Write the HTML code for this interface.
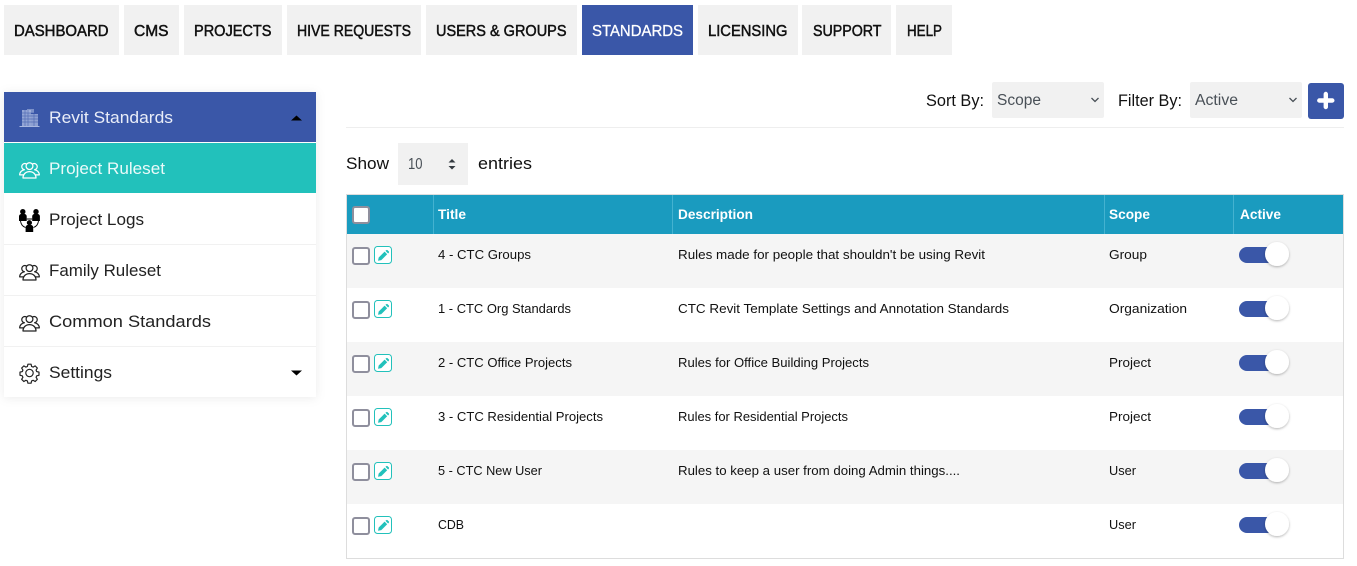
<!DOCTYPE html>
<html lang="en">
<head>
<meta charset="utf-8">
<title>Revit Standards</title>
<style>
html,body{margin:0;padding:0;background:#fff;width:1357px;height:566px;overflow:hidden}
svg{display:block}
text{font-family:"Liberation Sans",sans-serif;fill:#111}
.nav{font-size:15.5px;stroke:#111;stroke-width:.5px}
.side{font-size:17px;fill:#222}
.lbl{font-size:16.5px;fill:#111}
.sel{font-size:15.5px;fill:#495057}
.th{font-size:14px;font-weight:bold;fill:#fff}
.td{font-size:13px;fill:#111}
</style>
</head>
<body>
<svg width="1357" height="566" viewBox="0 0 1357 566" xmlns="http://www.w3.org/2000/svg">
<defs>
<filter id="sh" x="-10%" y="-10%" width="120%" height="120%"><feDropShadow dx="0" dy="1" stdDeviation="5" flood-color="#000" flood-opacity=".08"/></filter>
<filter id="ks" x="-30%" y="-30%" width="160%" height="160%"><feDropShadow dx="0" dy="1" stdDeviation="1.2" flood-color="#000" flood-opacity=".3"/></filter>
<g id="people" fill="none" stroke-width="1.25" stroke-linejoin="round" stroke-linecap="round">
<circle cx="10" cy="6.600" r="3.400"/>
<path d="M3.500 18.500c0-3.800 2.800-6.400 6.500-6.400s6.500 2.600 6.500 6.400z"/>
<path d="M6.600 4.300a3.100 3.100 0 1 0-1.700 5.900c-2.600.4-4.700 2.400-4.700 5.200h3.500"/>
<path d="M13.400 4.300a3.100 3.100 0 1 1 1.700 5.900c2.600.4 4.700 2.400 4.700 5.200h-3.500"/>
</g>
<g id="row"><rect x="353" y="248" width="16" height="16" rx="2" fill="#fff" stroke="#8f8f9d" stroke-width="2"/>
<rect x="374.500" y="246.500" width="17" height="17" rx="3" fill="#fff" stroke="#22c1bb" stroke-width="1"/>
<path d="M378 260.800l.7-3.300 5.900-5.900 2.600 2.600-5.900 5.900z" fill="#22c1bb"/>
<path d="M385.400 250.800l.8-.6c.5-.4 1-.4 1.400 0l1.200 1.200c.4.4.4.9 0 1.400l-.7.7z" fill="#22c1bb"/>
<rect x="1239" y="247" width="38" height="16" rx="8" fill="#3a57a8"/>
<circle cx="1277" cy="254" r="12" fill="#fff" filter="url(#ks)"/></g>
</defs>

<!-- top navigation -->
<g fill="#f1f1f1">
<rect x="4" y="5" width="115" height="50"/><rect x="124" y="5" width="55" height="50"/><rect x="184" y="5" width="98" height="50"/><rect x="287" y="5" width="134" height="50"/><rect x="426" y="5" width="151" height="50"/><rect x="582" y="5" width="111" height="50" fill="#3a57a8"/><rect x="698" y="5" width="100" height="50"/><rect x="802" y="5" width="89" height="50"/><rect x="896" y="5" width="56" height="50"/>
</g>
<text class="nav" x="14" y="36" textLength="94.500" lengthAdjust="spacingAndGlyphs">DASHBOARD</text>
<text class="nav" x="134" y="36" textLength="34.500" lengthAdjust="spacingAndGlyphs">CMS</text>
<text class="nav" x="194" y="36" textLength="77.500" lengthAdjust="spacingAndGlyphs">PROJECTS</text>
<text class="nav" x="297" y="36" textLength="114" lengthAdjust="spacingAndGlyphs">HIVE REQUESTS</text>
<text class="nav" x="436" y="36" textLength="130.500" lengthAdjust="spacingAndGlyphs">USERS &amp; GROUPS</text>
<text class="nav" x="592" y="36" textLength="91" lengthAdjust="spacingAndGlyphs" style="fill:#fff;stroke:#fff;stroke-width:.3px">STANDARDS</text>
<text class="nav" x="708" y="36" textLength="79.500" lengthAdjust="spacingAndGlyphs">LICENSING</text>
<text class="nav" x="813" y="36" textLength="68.500" lengthAdjust="spacingAndGlyphs">SUPPORT</text>
<text class="nav" x="907" y="36" textLength="35" lengthAdjust="spacingAndGlyphs">HELP</text>

<!-- sidebar -->
<rect x="4" y="92" width="312" height="305" fill="#fff" filter="url(#sh)"/>
<rect x="4" y="92" width="312" height="50" fill="#3a57a8"/>
<rect x="4" y="143" width="312" height="50" fill="#22c1bb"/>
<rect x="4" y="244" width="312" height="1" fill="#f1f1f1"/>
<rect x="4" y="295" width="312" height="1" fill="#f1f1f1"/>
<rect x="4" y="346" width="312" height="1" fill="#f1f1f1"/>

<!-- building icon -->
<g fill="#a9b8e0">
<rect x="19.500" y="126" width="20" height="1"/>
<rect x="22" y="110" width="9" height="16" opacity=".8"/>
<rect x="27" y="109" width="7" height="4" opacity=".6"/>
<rect x="31" y="114" width="7" height="12" opacity=".75"/>
</g>
<g stroke="#3a57a8" stroke-width=".7" fill="none" opacity=".7"><path d="M22 113h16M22 116h16M22 119h16M22 122h16M25 110v16M28 110v16M34 113v13"/></g>

<text class="side" x="49" y="123" textLength="124" lengthAdjust="spacingAndGlyphs" style="fill:#e9edf8">Revit Standards</text>
<path d="M291 120.500l5.500-5 5.500 5z" fill="#000"/>

<use href="#people" x="19.500" y="159.500" stroke="#fff"/>
<text class="side" x="49" y="174" textLength="116" lengthAdjust="spacingAndGlyphs" style="fill:#eafaf9">Project Ruleset</text>

<!-- project logs icon -->
<g fill="#000">
<circle cx="22.800" cy="211.700" r="2.700"/><path d="M19 221v-4.500c0-1.500 1-2.500 2.500-2.500h2.700c1.500 0 2.500 1 2.500 2.500v4.500z"/>
<circle cx="36" cy="211.700" r="2.700"/><path d="M32.200 221v-4.500c0-1.500 1-2.500 2.500-2.500h2.700c1.500 0 2.500 1 2.500 2.500v4.500z"/>
<circle cx="29.400" cy="222.700" r="2.600"/><path d="M25.600 232v-4.500c0-1.500 1-2.500 2.500-2.500h2.600c1.500 0 2.500 1 2.500 2.500v4.500z"/>
</g>
<path d="M20.500 221c.5 3.500 2 5.500 5 6.500M38.500 221c-.5 3.500-2 5.500-5 6.500M26.700 219h5.500" fill="none" stroke="#000" stroke-width=".9"/>
<text class="side" x="49" y="225" textLength="95" lengthAdjust="spacingAndGlyphs">Project Logs</text>

<use href="#people" x="19.500" y="261.500" stroke="#222"/>
<text class="side" x="49" y="276" textLength="112" lengthAdjust="spacingAndGlyphs">Family Ruleset</text>

<use href="#people" x="19.500" y="312.500" stroke="#222"/>
<text class="side" x="49" y="327" textLength="162" lengthAdjust="spacingAndGlyphs">Common Standards</text>

<!-- gear -->
<g fill="none" stroke="#222" stroke-width="1.350" stroke-linejoin="round" transform="translate(29.500 373) scale(.88) translate(-29.500 -373)">
<circle cx="29.500" cy="373" r="4.200"/>
<path d="M27.700 363h3.600l.6 2.600 1.700.7 2.300-1.400 2.500 2.500-1.400 2.300.7 1.700 2.600.6v3.600l-2.600.6-.7 1.700 1.400 2.300-2.500 2.500-2.300-1.400-1.700.7-.6 2.600h-3.600l-.6-2.600-1.700-.7-2.300 1.400-2.500-2.500 1.400-2.300-.7-1.700-2.600-.6v-3.600l2.600-.6.7-1.700-1.400-2.300 2.500-2.500 2.300 1.400 1.700-.7z"/>
</g>
<text class="side" x="49" y="378" textLength="63" lengthAdjust="spacingAndGlyphs">Settings</text>
<path d="M291 370.500h11l-5.500 5z" fill="#000"/>

<!-- toolbar -->
<text class="lbl" x="926" y="106" textLength="58" lengthAdjust="spacingAndGlyphs">Sort By:</text>
<rect x="992" y="82" width="112" height="36" rx="2" fill="#f1f1f1"/>
<text class="sel" x="997" y="105" textLength="44" lengthAdjust="spacingAndGlyphs">Scope</text>
<path d="M1091.500 98l3.500 3.500 3.500-3.500" fill="none" stroke="#495057" stroke-width="1.300"/>
<text class="lbl" x="1118" y="106" textLength="64" lengthAdjust="spacingAndGlyphs">Filter By:</text>
<rect x="1190" y="82" width="112" height="36" rx="2" fill="#f1f1f1"/>
<text class="sel" x="1195" y="105" textLength="43" lengthAdjust="spacingAndGlyphs">Active</text>
<path d="M1289.500 98l3.500 3.500 3.500-3.500" fill="none" stroke="#495057" stroke-width="1.300"/>
<rect x="1308" y="83" width="36" height="36" rx="3" fill="#3a57a8"/>
<path d="M1325.800 94v13M1319.300 100.500h13" stroke="#fff" stroke-width="4.400" stroke-linecap="round" fill="none"/>
<rect x="346" y="127" width="998" height="1" fill="#eee"/>

<!-- show entries -->
<text class="lbl" x="346" y="169" textLength="43" lengthAdjust="spacingAndGlyphs">Show</text>
<rect x="398" y="143" width="70" height="42" fill="#f1f1f1"/>
<text class="sel" x="408" y="169" textLength="14.500" lengthAdjust="spacingAndGlyphs" style="font-size:16px">10</text>
<path d="M448.500 162.500l3.500-3.500 3.500 3.500zM448.500 166l3.500 3.500 3.500-3.500z" fill="#343a40"/>
<text class="lbl" x="478" y="169" textLength="54" lengthAdjust="spacingAndGlyphs">entries</text>

<!-- table -->
<rect x="346.500" y="194.500" width="997" height="364" fill="#fff" stroke="#ddd"/>
<rect x="347" y="195" width="996" height="39" fill="#1a9bbf"/>
<g fill="#44b2d0"><rect x="433" y="195" width="1" height="39"/><rect x="672" y="195" width="1" height="39"/><rect x="1104" y="195" width="1" height="39"/><rect x="1233" y="195" width="1" height="39"/></g>
<rect x="353" y="207" width="16" height="16" rx="2" fill="#fff" stroke="#8f8f9d" stroke-width="2"/>
<text class="th" x="438" y="219" textLength="28" lengthAdjust="spacingAndGlyphs">Title</text>
<text class="th" x="678" y="219" textLength="75" lengthAdjust="spacingAndGlyphs">Description</text>
<text class="th" x="1109" y="219" textLength="41" lengthAdjust="spacingAndGlyphs">Scope</text>
<text class="th" x="1240" y="219" textLength="41" lengthAdjust="spacingAndGlyphs">Active</text>

<g fill="#f5f5f5">
<rect x="347" y="234" width="996" height="54"/>
<rect x="347" y="342" width="996" height="54"/>
<rect x="347" y="450" width="996" height="54"/>
</g>

<use href="#row"/>
<text class="td" x="438" y="259" textLength="93" lengthAdjust="spacingAndGlyphs">4 - CTC Groups</text>
<text class="td" x="678" y="259" textLength="307" lengthAdjust="spacingAndGlyphs">Rules made for people that shouldn't be using Revit</text>
<text class="td" x="1109" y="259" textLength="38" lengthAdjust="spacingAndGlyphs">Group</text>

<use href="#row" y="54"/>
<text class="td" x="438" y="313" textLength="133" lengthAdjust="spacingAndGlyphs">1 - CTC Org Standards</text>
<text class="td" x="678" y="313" textLength="331" lengthAdjust="spacingAndGlyphs">CTC Revit Template Settings and Annotation Standards</text>
<text class="td" x="1109" y="313" textLength="78" lengthAdjust="spacingAndGlyphs">Organization</text>

<use href="#row" y="108"/>
<text class="td" x="438" y="367" textLength="134" lengthAdjust="spacingAndGlyphs">2 - CTC Office Projects</text>
<text class="td" x="678" y="367" textLength="191" lengthAdjust="spacingAndGlyphs">Rules for Office Building Projects</text>
<text class="td" x="1109" y="367" textLength="42" lengthAdjust="spacingAndGlyphs">Project</text>

<use href="#row" y="162"/>
<text class="td" x="438" y="421" textLength="165" lengthAdjust="spacingAndGlyphs">3 - CTC Residential Projects</text>
<text class="td" x="678" y="421" textLength="170" lengthAdjust="spacingAndGlyphs">Rules for Residential Projects</text>
<text class="td" x="1109" y="421" textLength="42" lengthAdjust="spacingAndGlyphs">Project</text>

<use href="#row" y="216"/>
<text class="td" x="438" y="475" textLength="104" lengthAdjust="spacingAndGlyphs">5 - CTC New User</text>
<text class="td" x="678" y="475" textLength="282" lengthAdjust="spacingAndGlyphs">Rules to keep a user from doing Admin things....</text>
<text class="td" x="1109" y="475" textLength="27" lengthAdjust="spacingAndGlyphs">User</text>

<use href="#row" y="270"/>
<text class="td" x="438" y="529" textLength="26" lengthAdjust="spacingAndGlyphs">CDB</text>
<text class="td" x="1109" y="529" textLength="27" lengthAdjust="spacingAndGlyphs">User</text>
</svg>
</body>
</html>
